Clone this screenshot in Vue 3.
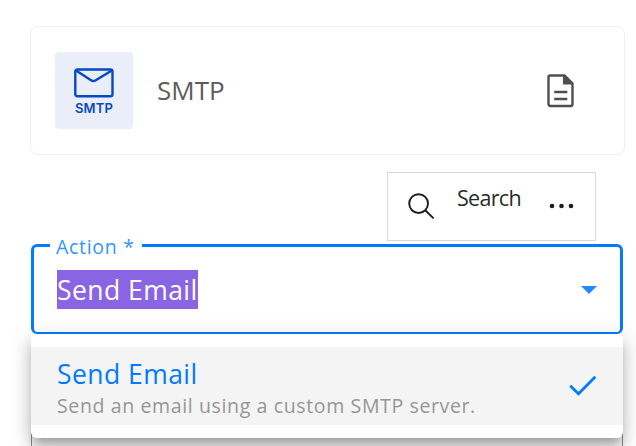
<script setup>
  import { ref } from 'vue';

  const open     = ref(true);
  const selected = ref('Send Email');

  const options = [
    { name: 'Send Email', description: 'Send an email using a custom SMTP server.' },
  ];

  function choose(option) {
    selected.value = option.name;
  }
</script>

<template>
  <div class="page">
    <div class="piece-card">
      <div class="piece-logo">
        <svg width="42" height="32" viewBox="0 0 42 32">
          <rect x="2.3" y="2.5" width="37.2" height="26.8" rx="2" />
          <path d="M3 3.4 L18 13.2 Q20.4 14.8 22.8 13.2 L38.8 3.4" />
        </svg>
        <span>SMTP</span>
      </div>
      <div class="piece-name">SMTP</div>
      <svg class="doc-icon" width="28" height="34" viewBox="0 0 28 34">
        <path class="sheet" d="M3 1.5 H17.5 L25.5 9.5 V30 Q25.5 32 23.5 32 H3.5 Q1.5 32 1.5 30 V3 Q1.5 1.5 3 1.5 Z" />
        <path class="fold" d="M16 1 H18 L26 9 V10.5 H16 Z" />
        <path class="lines" d="M7.2 18 H20.3 M7.2 25 H20.3" />
      </svg>
    </div>

    <div class="toolbar">
      <svg class="search-icon" width="28" height="28" viewBox="0 0 28 28">
        <circle cx="10.6" cy="10.6" r="9.4" />
        <path d="M17.2 17.2 L25.6 25.4" />
      </svg>
      <span class="search-label">Search</span>
      <svg class="dots" width="26" height="6" viewBox="0 0 26 6">
        <circle cx="3" cy="3" r="2.3" />
        <circle cx="12.5" cy="3" r="2.3" />
        <circle cx="22" cy="3" r="2.3" />
      </svg>
    </div>

    <div class="field" @click="open = !open">
      <span class="field-label">Action *</span>
      <span class="field-value">{{ selected }}</span>
      <svg class="caret" width="16" height="8" viewBox="0 0 16 8">
        <path d="M0 0 H16 L8 8 Z" />
      </svg>
    </div>

    <div v-if="open" class="panel">
      <div v-for="option in options" :key="option.name" class="option" @click="choose(option)">
        <div class="option-text">
          <div class="option-name">{{ option.name }}</div>
          <div class="option-description">{{ option.description }}</div>
        </div>
        <svg v-if="option.name === selected" class="check" width="28" height="22" viewBox="0 0 28 22">
          <path d="M1.2 10.8 L9.5 18.8 L26.3 1.8" />
        </svg>
      </div>
    </div>
    <div class="next-field"></div>
  </div>
</template>

<style>
  body {
    margin: 0;
    background: #fff;
  }
</style>

<style scoped>
  .page {
    width: 636px;
    height: 446px;
    padding-top: 26px;
    box-sizing: border-box;
    overflow: hidden;
    display: flex;
    flex-direction: column;
    font-family: "Open Sans", "Noto Sans", sans-serif;
  }

  svg {
    display: block;
    flex: none;
    fill: none;
  }

  .piece-card {
    flex: none;
    box-sizing: border-box;
    width: 595px;
    height: 129px;
    margin-left: 30px;
    padding: 0 49px 0 24px;
    border: 1px solid #eee;
    border-radius: 8px;
    display: flex;
    align-items: center;
  }

  .piece-logo {
    width: 78px;
    height: 77px;
    border-radius: 4px;
    background: #e9eef9;
    color: #0748c4;
    display: flex;
    flex-direction: column;
    align-items: center;
    padding-top: 15px;
    box-sizing: border-box;
  }

  .piece-logo svg {
    stroke: #0748c4;
    stroke-width: 2.4;
  }

  .piece-logo span {
    font: 600 13px/16px Inter, sans-serif;
    letter-spacing: 0.2px;
    margin-top: 1px;
  }

  .piece-name {
    flex: 1;
    margin-left: 24px;
    padding-bottom: 2px;
    font-size: 26px;
    color: #5c5c5c;
  }

  .doc-icon .sheet,
  .doc-icon .lines {
    stroke: #4f4f4f;
    stroke-width: 2.4;
  }

  .doc-icon .fold {
    fill: #4f4f4f;
  }

  .toolbar {
    flex: none;
    box-sizing: border-box;
    width: 209px;
    height: 69px;
    margin: 17px 0 3px 387px;
    padding: 0 20px;
    border: 1px solid #d8d8d8;
    display: flex;
    align-items: center;
  }

  .search-icon {
    stroke: #1c1c1c;
    stroke-width: 1.9;
  }

  .search-label {
    width: 64px;
    margin: 0 28px 18px 21px;
    font: 400 21.5px/30px "Open Sans", "Noto Sans", sans-serif;
    letter-spacing: -0.7px;
    color: #2a2a2a;
  }

  .dots {
    margin-bottom: 2px;
    fill: #1c1c1c;
  }

  .field {
    flex: none;
    box-sizing: border-box;
    position: relative;
    width: 592px;
    height: 90px;
    margin-left: 31px;
    padding: 0 23px;
    border: 3px solid #007bff;
    border-bottom-width: 2px;
    border-radius: 6px;
    display: flex;
    align-items: center;
    justify-content: space-between;
  }

  /* sits on the outline and cuts the notch */
  .field-label {
    position: absolute;
    top: -13px;
    left: 16px;
    box-sizing: border-box;
    width: 92px;
    padding-left: 6px;
    background: #fff;
    font-size: 19.5px;
    line-height: 26px;
    letter-spacing: 0.7px;
    white-space: nowrap;
    color: #3394ff;
  }

  .field-value {
    box-sizing: border-box;
    height: 39px;
    padding-top: 1px;
    background: #8a65e3;
    color: #fff;
    font-size: 26.5px;
    line-height: 38px;
    letter-spacing: 0.45px;
  }

  .caret {
    fill: #1f8bff;
  }

  .panel {
    flex: none;
    position: relative;
    z-index: 1;
    box-sizing: border-box;
    width: 592px;
    height: 104px;
    margin-left: 31px;
    padding: 13px 0;
    background: #fff;
    border-radius: 0 0 6px 6px;
    box-shadow: 0 8px 8px -4px rgba(0, 0, 0, 0.2), 0 12px 15px 1px rgba(0, 0, 0, 0.14), 0 5px 21px 3px rgba(0, 0, 0, 0.12);
  }

  .option {
    box-sizing: border-box;
    height: 78px;
    padding: 0 26px;
    background: #f4f4f4;
    display: flex;
    align-items: center;
    justify-content: space-between;
  }

  .option-text {
    padding-top: 4px;
  }

  .option-name {
    font-size: 26.5px;
    line-height: 36px;
    letter-spacing: 0.45px;
    color: #007bff;
  }

  .option-description {
    font-size: 19.5px;
    line-height: 28px;
    letter-spacing: 0.63px;
    color: #969696;
  }

  .check {
    stroke: #007bff;
    stroke-width: 2.8;
  }

  .next-field {
    flex: none;
    box-sizing: border-box;
    width: 592px;
    height: 60px;
    margin: -8px 0 0 31px;
    border: 1px solid #8c8c8c;
  }
</style>
